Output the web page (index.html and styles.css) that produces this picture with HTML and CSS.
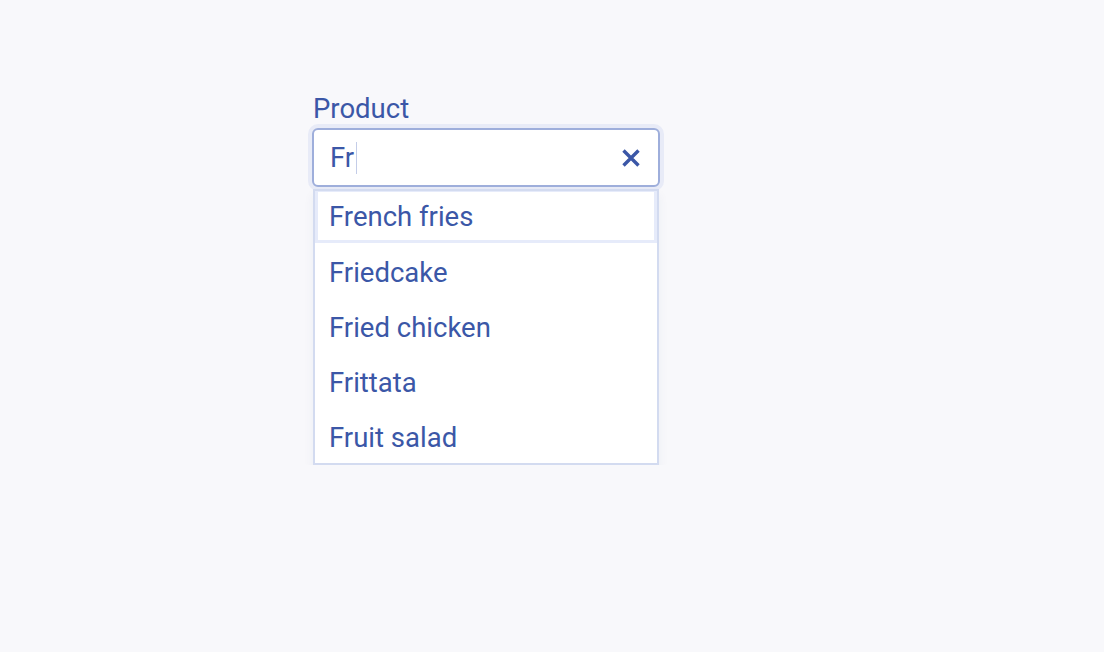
FILE: index.html
```html
<!DOCTYPE html>
<html lang="en">
<head>
    <meta charset="UTF-8">
    <title>Product</title>
    <link rel="stylesheet" href="styles.css">
</head>
<body>
    <div class="field">
        <label class="label" for="product">Product</label>
        <div class="input-box">
            <span class="value">Fr</span><span class="caret"></span>
            <svg class="clear" width="20" height="20" viewBox="0 0 20 20">
                <path d="M2.5 2.5 L17.5 17.5 M17.5 2.5 L2.5 17.5" stroke="#3b57a7" stroke-width="3.4" stroke-linecap="butt"/>
            </svg>
        </div>
        <ul class="options">
            <li class="option active">French fries</li>
            <li class="option">Friedcake</li>
            <li class="option">Fried chicken</li>
            <li class="option">Frittata</li>
            <li class="option">Fruit salad</li>
        </ul>
    </div>
</body>
</html>
```

FILE: styles.css
```css
body {
    margin: 0;
    background-color: #f8f8fb;
    font-family: Roboto, "Liberation Sans", sans-serif;
    color: #3b57a7;
}
.field {
    width: 348px;
    margin: 92px 0 0 312px;
}
.label {
    display: block;
    font-size: 27.5px;
    line-height: 34px;
    margin: 0 0 2px 1px;
}
.input-box {
    box-sizing: border-box;
    height: 59px;
    display: flex;
    align-items: center;
    padding: 0 17px 0 16px;
    background: #fff;
    border: 2px solid #9eaedb;
    border-radius: 6px;
    box-shadow: 0 0 0 4px #e8ebf7;
}
.value {
    font-size: 27.5px;
}
.caret {
    width: 1px;
    height: 32px;
    margin-left: 2px;
    background: #c4cde8;
}
.clear {
    margin-left: auto;
}
.options {
    list-style: none;
    margin: 2px 0 0 1px;
    padding: 0;
    width: 346px;
    box-sizing: border-box;
    background: #fff;
    border: 2px solid #d3dbf0;
    box-shadow: 0 6px 10px rgba(40, 60, 120, 0.06);
}
.option {
    box-sizing: border-box;
    height: 55px;
    display: flex;
    align-items: center;
    padding: 4px 0 0 14px;
    font-size: 27.5px;
}
.option.active {
    height: 52px;
    border: 3px solid #e6ebfa;
    border-top-width: 1px;
    padding: 0 0 0 11px;
}
```
